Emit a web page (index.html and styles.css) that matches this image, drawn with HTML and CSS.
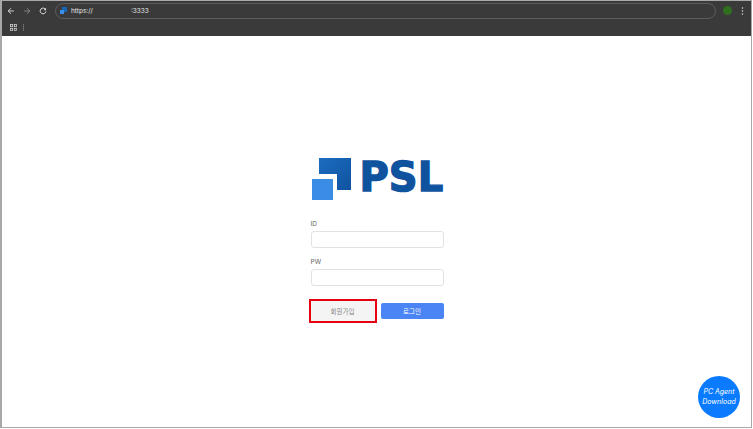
FILE: index.html
```html
<!DOCTYPE html>
<html lang="ko">
<head>
<meta charset="utf-8">
<title>PSL</title>
<link rel="stylesheet" href="styles.css">
</head>
<body>
<div class="frame">
  <header class="chrome">
    <div class="toolbar">
      <svg class="nav" viewBox="0 0 10 10"><path d="M8.5 5H1.5M5 1.5 1.5 5 5 8.5" fill="none" stroke="#e4e4e4" stroke-width="1.1"/></svg>
      <svg class="nav" viewBox="0 0 10 10"><path d="M1.5 5H8.5M5 1.5 8.5 5 5 8.5" fill="none" stroke="#8e8e8e" stroke-width="1.1"/></svg>
      <svg class="nav" viewBox="0 0 10 10"><path d="M8.2 3.2A3.6 3.6 0 1 0 8.6 5.6" fill="none" stroke="#e4e4e4" stroke-width="1.2"/><path d="M8.8 1v3H5.8z" fill="#e4e4e4"/></svg>
      <div class="omnibox">
        <svg class="favicon" viewBox="0 0 7 7"><rect x="2" width="5" height="5" fill="#1565b8"/><rect y="3" width="4" height="4" fill="#3d8fe6"/></svg>
        <span class="url">https://</span>
        <span class="port">:3333</span>
      </div>
      <span class="avatar"></span>
      <svg class="kebab" viewBox="0 0 3 11"><circle cx="1.5" cy="1.5" r="1" fill="#e4e4e4"/><circle cx="1.5" cy="5.5" r="1" fill="#e4e4e4"/><circle cx="1.5" cy="9.5" r="1" fill="#e4e4e4"/></svg>
    </div>
    <div class="bookmarks">
      <svg class="apps" viewBox="0 0 8 8"><g fill="none" stroke="#dcdcdc" stroke-width=".8"><rect x=".5" y=".5" width="2.6" height="2.6"/><rect x="4.9" y=".5" width="2.6" height="2.6"/><rect x=".5" y="4.9" width="2.6" height="2.6"/><rect x="4.9" y="4.9" width="2.6" height="2.6"/></g></svg>
      <span class="divider"></span>
    </div>
  </header>
  <main class="content">
    <form class="login">
      <div class="logo">
        <svg class="mark" viewBox="0 0 40 43"><defs><linearGradient id="big" x1="0" y1="0" x2="1" y2="1"><stop offset="0" stop-color="#1c6cc0"/><stop offset="1" stop-color="#0f539f"/></linearGradient></defs><path d="M8 0H40V32H26V16H8z" fill="url(#big)"/><rect x="1" y="21" width="21" height="21" fill="#3a8ce4"/></svg>
        <span class="wordmark">PSL</span>
      </div>
      <label class="field-label first">ID</label>
      <input class="field" type="text">
      <label class="field-label">PW</label>
      <input class="field" type="password">
      <div class="actions">
        <button class="btn btn-signup" type="button">회원가입</button>
        <button class="btn btn-login" type="button">로그인</button>
      </div>
    </form>
    <a class="agent">PC Agent<br>Download</a>
  </main>
</div>
</body>
</html>
```
FILE: styles.css
```css
* { box-sizing: border-box; }
html, body { margin: 0; height: 100%; }
body {
  background: #fff;
  font-family: "Noto Sans CJK KR", "Inter", sans-serif;
  overflow: hidden;
}
.frame {
  width: 752px;
  height: 428px;
  border: 1px solid #a8a8a8;
  border-left-width: 2px;
  display: flex;
  flex-direction: column;
}
.chrome { background: #3a3a3a; height: 35px; flex: none; }
.toolbar {
  display: flex;
  align-items: center;
  height: 19px;
  padding-left: 5px;
}
.nav { width: 8px; height: 8px; margin-right: 8px; flex: none; }
.omnibox {
  width: 661px;
  height: 16px;
  border: 1px solid #5c5c5c;
  border-radius: 8px;
  display: flex;
  align-items: center;
  padding-left: 4px;
  font: 6.5px "Inter", sans-serif;
  color: #e6e6e6;
}
.favicon { width: 7px; height: 7px; margin-right: 4px; }
.port { margin-left: 38px; }
.avatar {
  width: 9px;
  height: 9px;
  border-radius: 50%;
  background: #2f6f1e;
  margin-left: 7px;
}
.kebab { width: 3px; height: 8px; margin-left: 9px; }
.bookmarks {
  display: flex;
  align-items: center;
  height: 15px;
  padding-left: 8px;
}
.apps { width: 7px; height: 7px; }
.divider { width: 1px; height: 7px; background: #6a6a6a; margin-left: 6px; }
.content {
  flex: 1;
  position: relative;
  display: flex;
  justify-content: center;
  padding: 122px 0 0 1px;
}
.login { width: 133px; display: flex; flex-direction: column; }
.logo { display: flex; align-items: flex-start; height: 43px; }
.mark { width: 40px; height: 43px; flex: none; }
.wordmark {
  font: 700 40px/38px "DejaVu Sans", sans-serif;
  color: #0f539f;
  margin-left: 9px;
  -webkit-text-stroke: 1.4px #0f539f;
}
.field-label {
  font: 6.5px/8px "Inter", sans-serif;
  color: #666;
  margin-top: 10px;
  margin-bottom: 3px;
}
.field-label.first { margin-top: 19px; }
.field {
  height: 17px;
  width: 133px;
  border: 1px solid #e2e2e2;
  border-radius: 3px;
  background: #fff;
  outline: none;
  padding: 0;
}
.actions { display: flex; justify-content: space-between; align-items: center; margin-top: 15px; }
.btn {
  font: 6.5px "Noto Sans CJK KR", sans-serif;
  border: 0;
  padding: 0;
}
.btn-signup {
  width: 64px;
  height: 20px;
  background: #f4f4f4;
  color: #888;
  outline: 2px solid #e60012;
  outline-offset: 0;
}
.btn-login {
  width: 63px;
  height: 16px;
  background: #4a84f5;
  color: #fff;
  border-radius: 2px;
}
.agent {
  position: absolute;
  right: 11px;
  bottom: 9px;
  width: 42px;
  height: 42px;
  border-radius: 50%;
  background: #0a7bff;
  color: #fff;
  font: italic 7px/10px "Inter", sans-serif;
  display: flex;
  align-items: center;
  justify-content: center;
  text-align: center;
}
```
